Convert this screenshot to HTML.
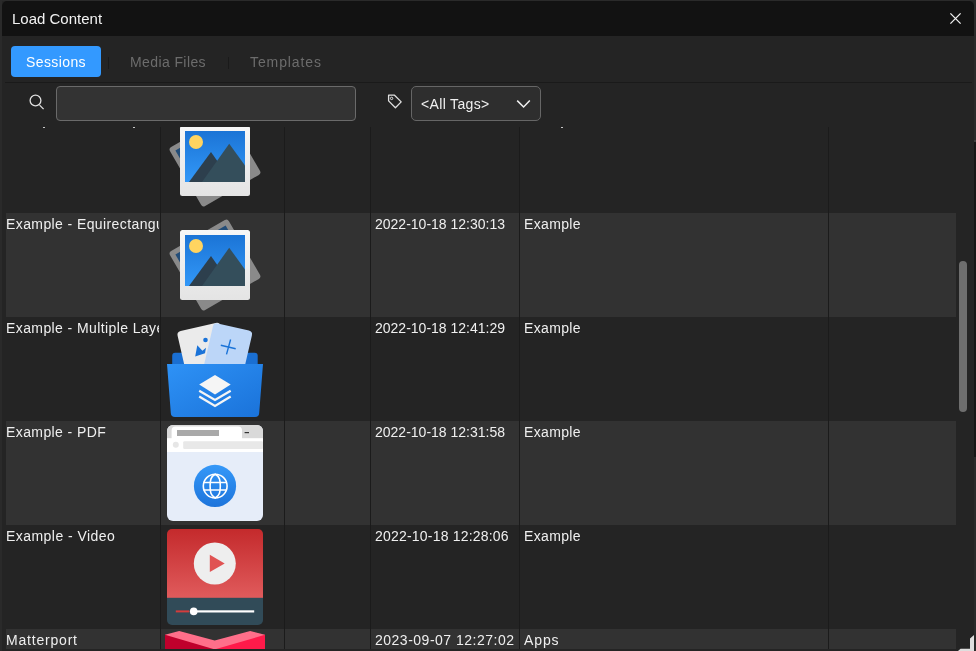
<!DOCTYPE html>
<html><head><meta charset="utf-8">
<style>
*{box-sizing:border-box;margin:0;padding:0}
html,body{width:976px;height:651px;overflow:hidden;background:#2a2a2a;font-family:"Liberation Sans",sans-serif;}
.a{position:absolute}
#dlg{position:absolute;left:2px;top:1px;width:972px;height:650px;background:#242424;}
#title{position:absolute;left:0;top:0;width:972px;height:35px;background:#121212;border-radius:5px 5px 0 0;}
.t{position:absolute;white-space:nowrap;font-size:14px;line-height:16px;color:#efefef;will-change:transform}
#tv{position:absolute;left:4px;top:126px;width:950px;height:522px;overflow:hidden}
.row{position:absolute;left:0;width:950px;height:104px}
.ev{background:#323232}
.vl{position:absolute;top:0;width:1px;height:522px;background:#1b1b1b}
.name{left:0px;letter-spacing:0.4px;top:3px;width:153px;overflow:hidden}
.date{left:369px;top:3px}
.tag{left:518px;top:3px;letter-spacing:0.35px}
.ic{position:absolute;left:161px;top:4px;width:96px;height:96px}
</style></head><body>
<div id="dlg">
  <div id="title">
    <div class="t" style="left:10px;top:9px;font-size:15px;line-height:18px;color:#f2f2f2">Load Content</div>
    <svg class="a" style="left:946px;top:11px" width="16" height="16" viewBox="0 0 16 16"><path d="M2.4 1.4L12.6 11.6M12.6 1.4L2.4 11.6" stroke="#f0f0f0" stroke-width="1.3" fill="none"/></svg>
  </div>
  <!-- tabs -->
  <div class="a" style="left:9px;top:45px;width:90px;height:31px;background:#3399ff;border-radius:4px"></div>
  <div class="t" style="left:24px;top:53px;color:#fff;letter-spacing:0.4px">Sessions</div>
  <div class="a" style="left:106px;top:56px;width:1px;height:12px;background:#1a1a1a"></div>
  <div class="t" style="left:128px;top:53px;color:#6c6c6c;letter-spacing:0.4px">Media Files</div>
  <div class="a" style="left:226px;top:56px;width:1px;height:12px;background:#1a1a1a"></div>
  <div class="t" style="left:248px;top:53px;color:#6c6c6c;letter-spacing:0.9px">Templates</div>
  <div class="a" style="left:3px;top:81px;width:967px;height:1px;background:#1a1a1a"></div>
  <!-- search -->
  <svg class="a" style="left:25px;top:91px" width="22" height="22" viewBox="0 0 22 22"><circle cx="8.5" cy="8.5" r="5.4" stroke="#e0e0e0" stroke-width="1.3" fill="none"/><path d="M12.6 13.1L16.6 17.1" stroke="#e0e0e0" stroke-width="1.3"/></svg>
  <div class="a" style="left:54px;top:85px;width:300px;height:35px;background:#333333;border:1px solid #6a6a6a;border-radius:4px"></div>
  <svg class="a" style="left:383px;top:90px" width="22" height="22" viewBox="0 0 22 22"><path d="M3.6 4.2H9.5L16.2 10.9L10.4 16.7L3.6 9.9Z" stroke="#e0e0e0" stroke-width="1.3" fill="none" stroke-linejoin="round"/><circle cx="6.6" cy="7.4" r="1.2" stroke="#e0e0e0" stroke-width="1" fill="none"/></svg>
  <div class="a" style="left:409px;top:85px;width:130px;height:35px;background:#2e2e2e;border:1px solid #666;border-radius:5px"></div>
  <div class="t" style="left:419px;top:95px;color:#f0f0f0;letter-spacing:0.35px">&lt;All Tags&gt;</div>
  <svg class="a" style="left:512px;top:96px" width="20" height="14" viewBox="0 0 20 14"><path d="M3.2 3.6L9.6 10L15.8 3.6" stroke="#f0f0f0" stroke-width="1.5" fill="none"/></svg>

  <!-- table -->
  <div id="tv">
    <svg width="0" height="0" style="position:absolute">
      <defs>
        <linearGradient id="gsky" x1="0" y1="0" x2="0" y2="1"><stop offset="0" stop-color="#1b74d6"/><stop offset="1" stop-color="#3298f8"/></linearGradient>
        <linearGradient id="gframe" x1="0" y1="0" x2="0" y2="1"><stop offset="0" stop-color="#f7f7f7"/><stop offset="1" stop-color="#e4e4e4"/></linearGradient>
        <linearGradient id="gfold" x1="0" y1="0" x2="1" y2="1"><stop offset="0" stop-color="#2e92f6"/><stop offset="1" stop-color="#1a72d9"/></linearGradient>
        <linearGradient id="gglobe" x1="0" y1="0" x2="0" y2="1"><stop offset="0" stop-color="#3598f8"/><stop offset="1" stop-color="#1d74db"/></linearGradient>
        <linearGradient id="gred" x1="0" y1="0" x2="0" y2="1"><stop offset="0" stop-color="#c42a2c"/><stop offset="1" stop-color="#e05b5c"/></linearGradient>
        <symbol id="pol" viewBox="0 0 96 96">
          <g transform="rotate(-30 48 48)">
            <rect x="14" y="14" width="68" height="68" rx="3" fill="#8a8a8a"/>
            <rect x="19" y="19" width="58" height="49" fill="#234d78"/>
          </g>
          <rect x="13" y="13" width="70" height="70" rx="2.5" fill="url(#gframe)"/>
          <svg x="18" y="18" width="60" height="51" viewBox="0 0 60 51" overflow="hidden">
            <rect width="60" height="51" fill="url(#gsky)"/>
            <circle cx="11" cy="11" r="7" fill="#ffd460"/>
            <path d="M4 51L26 21L47 51Z" fill="#2d3f4d"/>
            <path d="M17 51L44.2 12.7L72 51Z" fill="#344e5b"/>
          </svg>
        </symbol>
        <symbol id="fold" viewBox="0 0 96 96">
          <path d="M5.2 34.8Q5.2 31.8 8.2 31.8H87.7Q90.7 31.8 90.7 34.8V60H5.2Z" fill="#1a6fd2"/>
          <g transform="translate(10.3 11.3) rotate(-13)"><rect x="-0.5" y="-0.5" width="44" height="60" rx="4" fill="#ebebeb"/></g>
          <g fill="#1a73d8"><circle cx="38.5" cy="19" r="2.3"/><path d="M28.2 35.4L30.3 24.2L35.4 29.8L39 26.7L38 32.3Z"/></g>
          <g transform="translate(47.2 2.1) rotate(13)"><rect x="-0.5" y="-0.5" width="40" height="60" rx="4" fill="#bcd6f8"/></g>
          <path d="M53.8 24.2L68.7 27.7M63.6 18.5L59.5 33.4" stroke="#1a73d8" stroke-width="1.4"/>
          <path d="M0 43H96L92.2 92Q92 96 88 96H8Q4 96 3.8 92Z" fill="url(#gfold)"/>
          <path d="M48 54L63.7 63.6L48 73.6L32.2 63.6Z" fill="#f5f5f5"/>
          <path d="M32.2 69.7L48 79L63.7 69.7M32.2 75.5L48 85L63.7 75.5" stroke="#f5f5f5" stroke-width="2.2" fill="none"/>
        </symbol>
        <symbol id="brow" viewBox="0 0 96 96">
          <clipPath id="bclip"><rect width="96" height="96" rx="6"/></clipPath>
          <g clip-path="url(#bclip)">
            <rect width="96" height="96" fill="#e6edf9"/>
            <rect width="96" height="14" fill="#d9d9d9"/>
            <path d="M4.6 14V5.5Q4.6 1.6 8.5 1.6H71Q75 1.6 75 5.5V14Z" fill="#ffffff"/>
            <rect x="10" y="5" width="42" height="6" fill="#a9a9a9"/>
            <rect x="77.6" y="7" width="4.4" height="1.2" fill="#333"/>
            <rect y="13.2" width="96" height="13.8" fill="#ffffff"/>
            <circle cx="8.8" cy="19.8" r="3" fill="#e6e6e6"/>
            <rect x="16.2" y="16.3" width="80" height="7.6" rx="1.2" fill="#e8e8e8"/>
            <circle cx="48" cy="60.9" r="21.1" fill="url(#gglobe)"/>
            <g stroke="#ffffff" stroke-width="1.6" fill="none">
              <circle cx="48.2" cy="61.1" r="11.9"/>
              <path d="M48.2 49.2C43.6 51.6 43.1 55.5 43.1 61.1C43.1 66.7 43.6 70.6 48.2 73C52.8 70.6 53.3 66.7 53.3 61.1C53.3 55.5 52.8 51.6 48.2 49.2Z"/>
              <path d="M36.5 57.5H60M36.5 65H60"/>
            </g>
          </g>
        </symbol>
        <symbol id="vid" viewBox="0 0 96 96">
          <clipPath id="vclip"><rect width="96" height="96" rx="5"/></clipPath>
          <g clip-path="url(#vclip)">
            <rect width="96" height="69" fill="url(#gred)"/>
            <rect y="68.8" width="96" height="28" fill="#314b58"/>
          </g>
          <circle cx="47.8" cy="34.5" r="21" fill="#eeeeee"/>
          <path d="M42.8 25.7L57.7 34.5L42.8 43.1Z" fill="#e05353"/>
          <rect x="8.8" y="81.4" width="13.5" height="2" fill="#d33c3c"/>
          <rect x="30" y="81.3" width="57.2" height="2.2" fill="#ffffff"/>
          <circle cx="26.7" cy="82.4" r="3.8" fill="#ffffff"/>
        </symbol>
        
      </defs>
    </svg>
    <div class="row" style="top:-18px"></div>
    <div class="row ev" style="top:86px"></div>
    <div class="row" style="top:190px"></div>
    <div class="row ev" style="top:294px"></div>
    <div class="row" style="top:398px"></div>
    <div class="row ev" style="top:502px"></div>

    <svg class="ic" style="top:-14px"><use href="#pol"/></svg>
    <svg class="ic" style="top:90px"><use href="#pol"/></svg>
    <svg class="ic" style="top:194px"><use href="#fold"/></svg>
    <svg class="ic" style="top:298px"><use href="#brow"/></svg>
    <svg class="ic" style="top:402px"><use href="#vid"/></svg>
    <svg class="a" style="left:159px;top:502px" width="100" height="22" viewBox="0 0 100 22"><path d="M0 5.8L14.2 2.1L49.7 11.4L85.2 2.1L100 5.8V22H0Z" fill="#ff6f8a"/><path d="M0 5.8L49.7 20.4V22H0Z" fill="#c0002c"/><path d="M100 5.8L49.7 20.4V22H100Z" fill="#ff1a4a"/></svg>

    <div class="t name" style="top:89px">Example - Equirectangular</div>
    <div class="t date" style="top:89px">2022-10-18 12:30:13</div>
    <div class="t tag" style="top:89px">Example</div>
    <div class="t name" style="top:193px">Example - Multiple Layers</div>
    <div class="t date" style="top:193px">2022-10-18 12:41:29</div>
    <div class="t tag" style="top:193px">Example</div>
    <div class="t name" style="top:297px">Example - PDF</div>
    <div class="t date" style="top:297px">2022-10-18 12:31:58</div>
    <div class="t tag" style="top:297px">Example</div>
    <div class="t name" style="top:401px;letter-spacing:0.45px">Example - Video</div>
    <div class="t date" style="top:401px;letter-spacing:0.2px">2022-10-18 12:28:06</div>
    <div class="t tag" style="top:401px">Example</div>
    <div class="t name" style="top:505px;letter-spacing:0.8px">Matterport</div>
    <div class="t date" style="top:505px;letter-spacing:0.5px">2023-09-07 12:27:02</div>
    <div class="t tag" style="top:505px;letter-spacing:0.9px">Apps</div>

    <div class="a" style="left:37px;top:0;width:1.5px;height:1px;background:#c8c8c8"></div>
    <div class="a" style="left:127px;top:0;width:1.5px;height:1px;background:#c8c8c8"></div>
    <div class="a" style="left:555px;top:0;width:1.5px;height:1px;background:#c8c8c8"></div>

    <div class="vl" style="left:154px"></div>
    <div class="vl" style="left:278px"></div>
    <div class="vl" style="left:364px"></div>
    <div class="vl" style="left:513px"></div>
    <div class="vl" style="left:822px"></div>
  </div>
  <div class="a" style="left:957px;top:260px;width:8px;height:151px;background:#6e6e6e;border-radius:4px"></div>

  <div class="a" style="left:972px;top:139px;width:2px;height:3px;background:#3c3c3c"></div>
  <div class="a" style="left:972px;top:141px;width:2px;height:315px;background:#161616"></div>
  <svg class="a" style="left:956px;top:633px" width="18" height="18" viewBox="0 0 18 18"><path d="M16 1V17H0L2.5 14.8H12V4.5Z" fill="#dedede"/></svg>
</div>
</body></html>
